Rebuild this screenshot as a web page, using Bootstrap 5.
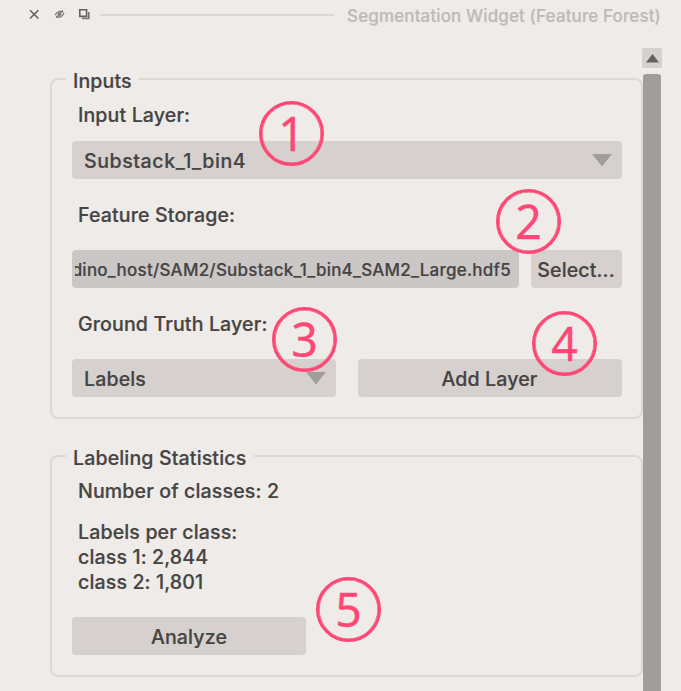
<!DOCTYPE html>
<html lang="en">
<head>
<meta charset="utf-8">
<meta name="viewport" content="width=device-width, initial-scale=1">
<title>Segmentation Widget (Feature Forest)</title>
<link href="https://cdn.jsdelivr.net/npm/bootstrap@5.3.0/dist/css/bootstrap.min.css" rel="stylesheet">
<style>
html, body { height: 691px; overflow: hidden; }
body { background: #efebe8; color: #464443; font: 500 19.6px/24px Inter, "Liberation Sans", sans-serif; letter-spacing: .12px; -webkit-text-stroke: .2px; }
.dock-title { height: 48px; padding: 0 20px 0 29px; }
.dock-title span { color: #bfbab7; font-size: 17px; line-height: 32px; letter-spacing: .12px; }
.dock-title .rule { height: 2px; background: #dbd7d4; margin: 14px 13px 0 9px; }
.dock-title svg { margin-top: 9px; }
.pane { width: 593px; margin-left: 50px; padding-top: 19px; flex: none; }
.group { border: 2px solid #dcd8d5; border-radius: 8px; padding: 0 19.5px 0 20px; min-width: 0; }
.group legend { font-size: 19.6px; line-height: 20px; margin: 0 0 0 -6px; padding: 4px 7.5px 0 7px; }
.g-inputs { height: 352px; }
.g-stats { height: 233px; margin-top: 25px; }
.field-label { margin-left: 6px; height: 24px; line-height: 25px; white-space: nowrap; }
.first-label { margin-top: 12px; }
.below-label { margin-top: 23px; }
.control { height: 38px; border: 0; border-radius: 4px; background: #d6d1ce; color: #464443; font-size: 19.6px; letter-spacing: .12px; -webkit-text-stroke: .2px; font-weight: 500; line-height: 40px; padding: 0 10px 0 12px; }
.control > span { padding-top: 2px; }
.layer-select { margin-top: 14px; }
.layer-select span { letter-spacing: .55px; }
.push { padding: 0; text-align: center; }
.path-box { width: 447px; padding: 0 8px 0 0; background: #cbc7c6; font-size: 17px; letter-spacing: .24px; }
.path-clip { overflow: hidden; margin-left: 3px; display: flex; justify-content: flex-end; white-space: nowrap; line-height: 41px; height: 38px; }
.select-btn { width: 91px; }
.half { width: 264px; }
.analyze { width: 234px; margin-top: 22px; }
.class-count { margin-top: 11px; }
.class-list { margin-top: 17px; height: 75px; }
.bar { width: 20px; flex: none; margin-left: -1px; }
.bar-up { height: 20px; border-radius: 2px; background: #d6d1ce; }
.bar-thumb { width: 18px; height: 640px; margin: 6px auto 0; border-radius: 3px 3px 0 0; background: #a29d99; }
.step { position: absolute; width: 65px; height: 65px; border: 3px solid #ff4775; box-shadow: inset 0 0 0 .6px #ff4775; border-radius: 50%; color: #ff4775; font: 400 46.5px/59px "Noto Sans", sans-serif; letter-spacing: 0; text-align: center; -webkit-text-stroke: .3px #ff4775; }
.s1 { left: 259px; top: 101px; } .s2 { left: 496px; top: 189px; } .s3 { left: 272px; top: 307px; }
.s4 { left: 532px; top: 311px; } .s5 { left: 316px; top: 577px; }
</style>
</head>
<body>
<header class="dock-title d-flex align-items-start">
  <svg width="62" height="11" viewBox="0 0 62 11" fill="none" stroke="#65615f" stroke-width="1.6">
    <path d="M1 1.2l8.4 8.3M9.4 1.2L1 9.5"/>
    <g stroke="#7d7976"><path d="M26 6.2q3.4-5.4 8.4-3.2M35 4q-2.8 6-8 3.2M27.5 8.8l6.4-7.4" stroke-width="1.3"/><circle cx="30.5" cy="5.2" r="1.8" fill="#7d7976" stroke="none"/></g>
    <path d="M50.8 .8h6.8v6.6h-6.8z"/><path d="M53 9.4h6.8V3" stroke="#7d7976" stroke-width="1.8"/>
  </svg>
  <div class="rule flex-grow-1"></div>
  <span>Segmentation Widget (Feature Forest)</span>
</header>
<main class="d-flex">
  <div class="pane">
    <fieldset class="group g-inputs">
      <legend class="float-none w-auto">Inputs</legend>
      <div class="field-label first-label">Input Layer:</div>
      <div class="control layer-select d-flex align-items-center justify-content-between">
        <span>Substack_1_bin4</span>
        <svg width="20" height="13" viewBox="0 0 20 13"><path d="M0 0h20L10 12.5z" fill="#a29d99"/></svg>
      </div>
      <div class="field-label mt-4">Feature Storage:</div>
      <div class="below-label d-flex justify-content-between">
        <div class="control path-box"><div class="path-clip"><span>dino_host/SAM2/Substack_1_bin4_SAM2_Large.hdf5</span></div></div>
        <button class="control push select-btn" type="button">Select...</button>
      </div>
      <div class="field-label mt-4">Ground Truth Layer:</div>
      <div class="below-label d-flex justify-content-between">
        <div class="control half d-flex align-items-center justify-content-between">
          <span>Labels</span>
          <svg width="20" height="13" viewBox="0 0 20 13"><path d="M0 0h20L10 12.5z" fill="#a29d99"/></svg>
        </div>
        <button class="control push half" type="button">Add Layer</button>
      </div>
    </fieldset>
    <fieldset class="group g-stats">
      <legend class="float-none w-auto">Labeling Statistics</legend>
      <div class="field-label class-count">Number of classes: 2</div>
      <div class="field-label class-list">Labels per class:<br>class 1: 2,844<br>class 2: 1,801</div>
      <button class="control push analyze d-block" type="button">Analyze</button>
    </fieldset>
  </div>
  <div class="bar">
    <div class="bar-up d-flex align-items-center justify-content-center"><svg width="13" height="9" viewBox="0 0 13 9"><path d="M6.5 0L13 8.5H0z" fill="#64605e"/></svg></div>
    <div class="bar-thumb"></div>
  </div>
</main>
<div class="step s1">1</div>
<div class="step s2">2</div>
<div class="step s3">3</div>
<div class="step s4">4</div>
<div class="step s5">5</div>
</body>
</html>
